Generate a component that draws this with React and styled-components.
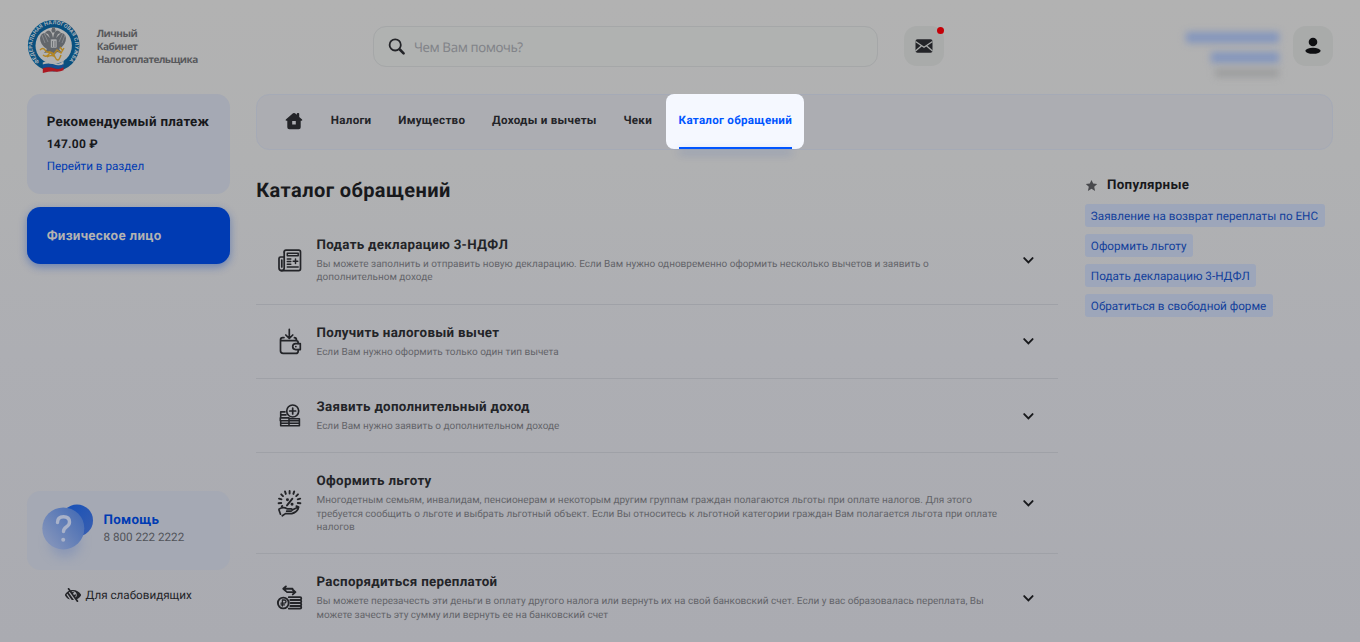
import styled, { createGlobalStyle, css } from "styled-components";
import { FaLowVision } from "react-icons/fa";

const colors = {
  blue: "#003bb3",
  dark: "#18191c",
  text: "#232428",
  gray: "#636469",
  card: "#a5a9b4",
  line: "#9fa1a7",
  white: "#b2b2b2",
};

const GlobalStyle = createGlobalStyle`
  * {
    box-sizing: border-box;
  }
  body {
    margin: 0;
    overflow: hidden;
    font-family: Roboto, "Noto Sans", sans-serif;
    color: ${colors.dark};
    text-rendering: geometricPrecision;
  }
  h1, h2, h3, p {
    margin: 0;
  }
`;

const Page = styled.div`
  width: 1360px;
  height: 642px;
  overflow: hidden;
  display: flex;
  flex-direction: column;
  background: linear-gradient(180deg, #b2b2b2 0%, #b0b1b2 25%, #adaeb3 55%, #aaabb1 100%);
`;

const Header = styled.header`
  height: 93.5px;
  flex: none;
  padding: 0 26.67px 0.5px;
  display: flex;
  align-items: center;
`;

const Brand = styled.div`
  width: 346.3px;
  display: flex;
  align-items: center;
  gap: 16px;
  color: #58595c;
  font: 700 10px/13.33px "Open Sans", sans-serif;
  letter-spacing: -0.5px;
  & svg {
    display: block;
    margin-bottom: 1px;
  }
`;

const Search = styled.div`
  width: 504.6px;
  height: 41px;
  border: 1px solid #a5a7a8;
  border-radius: 13px;
  padding: 1px 14px 0;
  display: flex;
  align-items: center;
  gap: 8px;
  color: #828489;
  background: #b0b2b1;
  font: 400 13.33px/20px "Noto Sans", sans-serif;
  letter-spacing: -0.4px;
`;

const IconButton = styled.div`
  position: relative;
  width: 40px;
  height: 40px;
  flex: none;
  margin-bottom: 0.7px;
  border-radius: 13px;
  background: #a9abaa;
  display: flex;
  align-items: center;
  justify-content: center;
`;

const MessagesButton = styled(IconButton)`
  margin-left: 26.4px;
`;

const Dot = styled.span`
  position: absolute;
  top: 1px;
  right: 0;
  width: 7px;
  height: 7px;
  border-radius: 50%;
  background: #c40007;
`;

const User = styled.div`
  margin-left: auto;
  margin-right: 14px;
  padding-top: 15px;
  display: flex;
  flex-direction: column;
  align-items: flex-end;
`;

const Blurred = styled.span`
  width: ${(p) => p.$width}px;
  height: ${(p) => p.$height}px;
  margin-bottom: ${(p) => p.$gap}px;
  background: ${(p) => (p.$muted ? "#9b9c9d" : "#8496bd")};
  filter: blur(3.5px);
`;

const Body = styled.div`
  flex: 1;
  min-height: 0;
  padding: 0 26.67px;
  display: flex;
  gap: 26.6px;
`;

const Sidebar = styled.aside`
  width: 203px;
  flex: none;
  display: flex;
  flex-direction: column;
`;

const Payment = styled.div`
  height: 100px;
  border-radius: 13.3px;
  padding: 19.2px 20px 0;
  background: ${colors.card};
  display: flex;
  flex-direction: column;
  white-space: nowrap;
  & h3 {
    font: 700 13.33px/20px Roboto;
    letter-spacing: 0.3px;
  }
  & b {
    font: 700 12px/20px Roboto, "Noto Sans";
    letter-spacing: 0.25px;
    margin: 1.8px 0 1.2px;
  }
  & span {
    font-size: 11.67px;
    line-height: 20px;
    color: ${colors.blue};
  }
`;

const Person = styled.div`
  height: 57px;
  margin-top: 13.5px;
  border-radius: 13.3px;
  padding: 1px 20px 0;
  display: flex;
  align-items: center;
  background: ${colors.blue};
  color: ${colors.white};
  box-shadow: 0 3px 9px rgba(0, 59, 179, 0.4);
  font-weight: 700;
  font-size: 13.33px;
  letter-spacing: 0.3px;
`;

const Help = styled.div`
  height: 79px;
  margin-top: auto;
  border-radius: 13.3px;
  padding-left: 11px;
  display: flex;
  align-items: center;
  gap: 7.8px;
  background: ${colors.card};
  & div {
    padding-bottom: 3px;
  }
  & h3 {
    font-size: 13.33px;
    line-height: 18px;
    letter-spacing: 0.3px;
    color: ${colors.blue};
  }
  & p {
    font-size: 11.67px;
    line-height: 16px;
    margin-top: -1px;
    color: #515359;
  }
`;

const LowVision = styled.div`
  height: 72.5px;
  padding-bottom: 21px;
  display: flex;
  align-items: center;
  justify-content: center;
  gap: 5px;
  font-size: 11.67px;
  color: ${colors.text};
`;

const Content = styled.main`
  flex: 1;
  min-width: 0;
`;

const Nav = styled.nav`
  height: 56.5px;
  border: 1px solid #a5aab6;
  border-radius: 13.3px;
  padding-left: 26.8px;
  display: flex;
  align-items: center;
  background: #acadb2;
  white-space: nowrap;
`;

const NavItem = styled.div`
  font-weight: 700;
  font-size: 11.6px;
  letter-spacing: 0.28px;
  color: ${colors.text};
  margin-left: 26.8px;
  padding-bottom: 3px;
  ${(p) =>
    p.$active &&
    css`
      position: relative;
      height: 55px;
      margin-left: 14.4px;
      padding: 0 12.2px 3px;
      display: flex;
      align-items: center;
      border-radius: 8px;
      background: #f5f8ff;
      color: #0055ff;
      &::after {
        content: "";
        position: absolute;
        left: 12.2px;
        right: 12.2px;
        bottom: 0;
        height: 2px;
        background: #0055ff;
        box-shadow: 0 4px 9px rgba(0, 59, 179, 0.4);
      }
    `}
`;

const HomeLink = styled.div`
  width: 20px;
  height: 20px;
  margin-bottom: 2px;
`;

const Columns = styled.div`
  display: flex;
  gap: 27px;
`;

const Catalog = styled.section`
  width: 801.3px;
  flex: none;
`;

const Heading = styled.h1`
  font-size: 20px;
  line-height: 26.6px;
  letter-spacing: 0.42px;
  padding-top: 26.7px;
  margin-bottom: 13.6px;
`;

const Item = styled.div`
  padding: 20px 20px;
  border-bottom: 1px solid ${colors.line};
  display: flex;
  align-items: center;
  &:last-child {
    border-color: transparent;
  }
  & > svg {
    flex: none;
    display: block;
  }
`;

const ItemText = styled.div`
  width: 688px;
  margin: 1.2px auto -1.2px 13.3px;
  & h3 {
    font-size: 13.33px;
    line-height: 16.67px;
    letter-spacing: 0.3px;
    margin-bottom: 3.33px;
    color: ${colors.text};
  }
  & p {
    font-size: 10px;
    line-height: 13.33px;
    color: ${colors.gray};
    white-space: pre-line;
  }
`;

const Popular = styled.section`
  padding-top: 26px;
  display: flex;
  flex-direction: column;
  align-items: flex-start;
`;

const PopularTitle = styled.h3`
  display: flex;
  align-items: center;
  gap: 9.5px;
  font-size: 13.33px;
  line-height: 20px;
  letter-spacing: 0.3px;
  margin-bottom: 8px;
  & svg {
    display: block;
    margin-bottom: 1.5px;
  }
`;

const Tag = styled.span`
  height: 23.3px;
  line-height: 24px;
  margin-bottom: 6.7px;
  padding: 0 6.5px 0 6.3px;
  border-radius: 3px;
  background: #9da6ba;
  color: #123f9c;
  font-size: 11.69px;
  white-space: nowrap;
`;

function Logo() {
  return (
    <svg width="54" height="56" viewBox="0 0 54 56">
      <circle cx="26.7" cy="27.7" r="25.8" fill="#09507f" />
      <circle cx="26.7" cy="27.7" r="18.2" fill="#b2b2b2" />
      <defs>
        <path id="ring" d="M12.5 43.7A21.4 21.4 0 1 1 40.9 43.7" />
      </defs>
      <text fontFamily="Roboto" fontWeight="700" fontSize="5.4" letterSpacing="0" fill="#a9b2b9">
        <textPath href="#ring" textLength="101">ФЕДЕРАЛЬНАЯ НАЛОГОВАЯ СЛУЖБА</textPath>
      </text>
      <g fill="#62666b">
        <path d="M25 16q-2-5-5-3l-2 2 3 1 2 4-5-5q-4 0-5 5 0 7 7 11l-3 4 5-1 4 4 4-4 5 1-3-4q7-4 7-11-1-5-5-5l-5 5 2-4 3-1-2-2q-3-2-5 3l-1 4z" />
        <path d="M25 9.5h3v2h-3zM24.2 11.5h4.6l-.8 3h-3z" />
      </g>
      <path d="M15 17l3 8M17 15l4 9M38 17l-3 8M36 15l-4 9" stroke="#94979b" strokeWidth=".7" />
      <rect x="23.5" y="21" width="6.5" height="9" rx="1" fill="#a8aaac" stroke="#62666b" strokeWidth=".6" />
      <path d="M25.5 23v6M28 23v6" stroke="#62666b" strokeWidth=".8" />
      <path
        d="M13 32q3-3 5 0t4 2 4 3l4-5 4 3 3-5M16 37q3 3 6-1t6 3 6-2M33 29l3 4M20 39q5-3 8 0"
        fill="none"
        stroke="#b38624"
        strokeWidth="1.4"
      />
      <path d="M15.8 44.5q6-3 11.2 0t9.5-2v4q-4 2-9.3 0t-11.4 0z" fill="#b2b2b2" />
      <path d="M15.8 47q6-2 11.2 0t9.5-1v4q-4 2-9.3 0t-11.4 0z" fill="#174d91" />
      <path d="M15.8 50.2q6-2 11.2 0t9.5-1v3q-4 2-8.5 1.3t-12.2 1.5z" fill="#ab1821" />
    </svg>
  );
}

const stroke = {
  fill: "none",
  stroke: colors.text,
  strokeWidth: 1.7,
  strokeLinecap: "round",
  strokeLinejoin: "round",
};

function ItemIcon({ children }) {
  return (
    <svg width="27" height="27" viewBox="0 0 27 27" {...stroke}>
      {children}
    </svg>
  );
}

const DeclarationIcon = () => (
  <ItemIcon>
    <path d="M8.2 5q0-1.8 1.8-1.8h12.7q1.8 0 1.8 1.8v16.8q0 1.8-1.8 1.8H5.2" />
    <path d="M8.2 5v16q0 2.6-2.6 2.6T3 21v-9.4Q3 10 4.6 10h3.2M5.8 13v7" />
    <path d="M11.3 6.2h10.9v2.6H11.3zM11.3 12h3.5M11.3 14.6h3.5M11.3 17.2h3.5M11.3 20h10.9M19.5 12v4.6M17.2 14.3h4.6" strokeWidth="1.5" />
  </ItemIcon>
);

const WalletIcon = () => (
  <ItemIcon>
    <path d="M13.3 1.4v8.6M9.8 7l3.5 3.4L16.8 7" />
    <path d="M8 9.6H6.7Q4.5 9.6 4.5 12v10.8q0 2.6 2.6 2.6h12.6q2.5 0 2.5-2.5v-1.2M5 12.2q.7.5 1.8.5h13.1q2.3 0 2.3 2.3v.5M18.4 9.7q2 .1 2.1 2.4" />
    <path d="M24.3 15.6h-4.6a3 3 0 0 0 0 6h4.6zM19.8 18.6h.1" />
  </ItemIcon>
);

const IncomeIcon = () => (
  <ItemIcon>
    <circle cx="16.7" cy="9" r="6" />
    <path d="M16.7 6v6M13.7 9h6" />
    <path
      d="M9 9.9H4.7v3h5.3M4.7 12.9v3h8.3M4.7 15.9h-.4v2.9h19.1v-2.1H13v7M4.7 18.8v4.9h18.7v-4.9M4.7 21.2h18.7"
      strokeWidth="1.6"
    />
  </ItemIcon>
);

const BenefitIcon = () => (
  <ItemIcon>
    <path d="M11.4 9.8h.1M16 14.3h.1" strokeWidth="2.9" />
    <path d="M16.4 8.7l-5.4 6.7" strokeWidth="1.9" />
    <path
      d="M13.6 1v2.6M9 1.4l.8 2.5M18.2 1.4l-.8 2.5M5.2 4.3l1.8 1.8M22 4.3l-1.8 1.8M3 8.6l2.5.7M24.2 8.6l-2.5.7M2.6 13.2l2.6-.2M24.4 13.2l-2.6-.2M5.8 16.3l.5-.3M20.4 16.2l2.2 1"
      strokeWidth="1.9"
    />
    <path d="M3 19.2q3-2.3 6.5-1.3l2 1h3.5q1.3.2 1 1.4-.5.9-1.5.9h-3.8M16.2 20l4.6-2.3q1.7-.4 1.4 1.1-1.8 3.7-6.4 4.8H9.5l-3.2 2.2M3 20l1.5 4.2" />
  </ItemIcon>
);

const OverpayIcon = () => (
  <ItemIcon>
    <path d="M16.5 4.8H7.3M9.9 2.4L7.3 4.8l2.6 2.3M11 8.1h8.4M16.8 5.7l2.6 2.4-2.6 2.3" strokeWidth="1.9" />
    <circle cx="7.3" cy="19" r="5.4" strokeWidth="1.9" />
    <path d="M6.4 22v-6h1.8q1.8 0 1.8 1.6t-1.8 1.6H5M5 20.8h3.5" strokeWidth="1.3" />
    <path
      d="M12.8 13.2h11.3q1.2 0 1.2 1.4T24.1 16H14.3M24.1 16q1.2 0 1.2 1.5T24.1 19h-9.5M24.1 19q1.2 0 1.2 1.4T24.1 22h-9.8M24.1 22q1.2 0 1.2 1.3t-1.2 1.3H12.8"
      strokeWidth="1.8"
    />
  </ItemIcon>
);

function Chevron() {
  return (
    <svg width="20" height="14" viewBox="0 0 20 14" fill="none" stroke={colors.dark} strokeWidth="1.9">
      <path d="M6.2 5.1l4.2 4.2 4.2-4.2" strokeLinecap="round" />
    </svg>
  );
}

function HelpIcon() {
  return (
    <svg width="58" height="72" viewBox="0 0 58 72">
      <defs>
        <linearGradient id="back" x1="0" y1="0" x2="1" y2="1">
          <stop offset="0" stopColor="#1550b8" />
          <stop offset="1" stopColor="#3a5fb0" />
        </linearGradient>
        <linearGradient id="front" x1="1" y1="0" x2="0.1" y2="0.7">
          <stop offset="0" stopColor="#3e67b4" />
          <stop offset="1" stopColor="#7f91ba" />
        </linearGradient>
        <filter id="soft" x="-50%" y="-50%" width="200%" height="200%">
          <feGaussianBlur stdDeviation="6" />
        </filter>
      </defs>
      <circle cx="27" cy="48" r="15" fill="#6f86b8" opacity=".5" filter="url(#soft)" />
      <circle cx="39" cy="26.4" r="16" fill="url(#back)" />
      <circle cx="25.3" cy="34.4" r="21" fill="url(#front)" />
      <path
        d="M19.5 28.5q0-5.8 6-5.8t6 5.3q0 3-3.2 5-2.8 1.8-2.8 4.6"
        fill="none"
        stroke="#a9b2c9"
        strokeWidth="3.4"
        strokeLinecap="round"
      />
      <circle cx="25.2" cy="45.7" r="2" fill="#a9b2c9" />
    </svg>
  );
}

const navItems = ["Налоги", "Имущество", "Доходы и вычеты", "Чеки"];

const items = [
  {
    Icon: DeclarationIcon,
    title: "Подать декларацию 3-НДФЛ",
    text: "Вы можете заполнить и отправить новую декларацию. Если Вам нужно одновременно оформить несколько вычетов и заявить о\nдополнительном доходе",
  },
  {
    Icon: WalletIcon,
    title: "Получить налоговый вычет",
    text: "Если Вам нужно оформить только один тип вычета",
  },
  {
    Icon: IncomeIcon,
    title: "Заявить дополнительный доход",
    text: "Если Вам нужно заявить о дополнительном доходе",
  },
  {
    Icon: BenefitIcon,
    title: "Оформить льготу",
    text: "Многодетным семьям, инвалидам, пенсионерам и некоторым другим группам граждан полагаются льготы при оплате налогов. Для этого\nтребуется сообщить о льготе и выбрать льготный объект. Если Вы относитесь к льготной категории граждан Вам полагается льгота при оплате\nналогов",
  },
  {
    Icon: OverpayIcon,
    title: "Распорядиться переплатой",
    text: "Вы можете перезачесть эти деньги в оплату другого налога или вернуть их на свой банковский счет. Если у вас образовалась переплата, Вы\nможете зачесть эту сумму или вернуть ее на банковский счет",
  },
];

const popular = [
  "Заявление на возврат переплаты по ЕНС",
  "Оформить льготу",
  "Подать декларацию 3-НДФЛ",
  "Обратиться в свободной форме",
];

function App() {
  return (
    <Page>
      <GlobalStyle />
      <Header>
        <Brand>
          <Logo />
          <div>
            Личный
            <br />
            Кабинет
            <br />
            Налогоплательщика
          </div>
        </Brand>
        <Search>
          <svg width="18" height="18" viewBox="0 0 18 18" fill="none" stroke={colors.text} strokeLinecap="round">
            <circle cx="7.2" cy="6.9" r="5.6" strokeWidth="1.8" />
            <path d="M11.8 11.5l3.8 3.8" strokeWidth="2.6" />
          </svg>
          Чем Вам помочь?
        </Search>
        <MessagesButton>
          <svg width="18" height="14" viewBox="0 0 18 14">
            <rect x=".5" y=".3" width="17" height="13.4" rx="2" fill={colors.text} />
            <path d="M.5 2.5L9 8.3l8.5-5.8M.5 12l5.8-5M17.5 12l-5.8-5" fill="none" stroke="#a9abaa" strokeWidth="1.3" />
          </svg>
          <Dot />
        </MessagesButton>
        <User>
          <Blurred $width={93} $height={11} $gap={9} />
          <Blurred $width={68} $height={11} $gap={6} />
          <Blurred $width={64} $height={8} $gap={0} $muted />
        </User>
        <IconButton>
          <svg width="16" height="18" viewBox="0 0 16 18" fill="#0e0f11">
            <circle cx="8" cy="5" r="4.3" />
            <ellipse cx="8" cy="13.8" rx="7.6" ry="3" />
          </svg>
        </IconButton>
      </Header>
      <Body>
        <Sidebar>
          <Payment>
            <h3>Рекомендуемый платеж</h3>
            <b>147.00 ₽</b>
            <span>Перейти в раздел</span>
          </Payment>
          <Person>Физическое лицо</Person>
          <Help>
            <HelpIcon />
            <div>
              <h3>Помощь</h3>
              <p>8 800 222 2222</p>
            </div>
          </Help>
          <LowVision>
            <FaLowVision size={16} />
            Для слабовидящих
          </LowVision>
        </Sidebar>
        <Content>
          <Nav>
            <HomeLink>
              <svg width="20" height="20" viewBox="0 0 20 20" fill={colors.text}>
                <path
                  fillRule="evenodd"
                  d="M9 2.3q1-.8 2 0l1.8 1.5V2.7q0-.8.9-.8h.7q.8 0 .8.8v3.2l2.9 2.6q.7 1.2-.8 1.3h-.6v6.5q0 2-2 2H5.3q-2 0-2-2V9.8h-.6Q1 9.7 1.8 8.5zM8.2 10v3.4h3.6V10z"
                />
              </svg>
            </HomeLink>
            {navItems.map((label) => (
              <NavItem key={label}>{label}</NavItem>
            ))}
            <NavItem $active>Каталог обращений</NavItem>
          </Nav>
          <Columns>
            <Catalog>
              <Heading>Каталог обращений</Heading>
              {items.map(({ Icon, title, text }) => (
                <Item key={title}>
                  <Icon />
                  <ItemText>
                    <h3>{title}</h3>
                    <p>{text}</p>
                  </ItemText>
                  <Chevron />
                </Item>
              ))}
            </Catalog>
            <Popular>
              <PopularTitle>
                <svg width="13" height="13" viewBox="0 0 13 13" fill="#48494d">
                  <path d="M6.5.9l1.7 3.7 4 .4-3 2.8.9 4.2-3.6-2.2L2.9 12l.9-4.2L.8 5l4-.4z" />
                </svg>
                Популярные
              </PopularTitle>
              {popular.map((label) => (
                <Tag key={label}>{label}</Tag>
              ))}
            </Popular>
          </Columns>
        </Content>
      </Body>
    </Page>
  );
}

export default App;
